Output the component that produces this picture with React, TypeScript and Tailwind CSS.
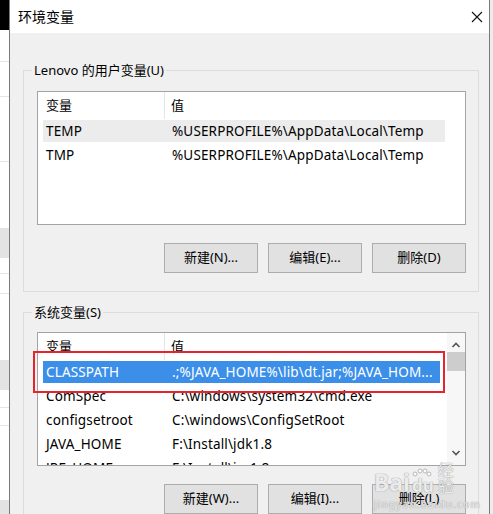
import React from 'react';

const FONT = "font-['Noto_Sans','Noto_Sans_CJK_SC',sans-serif]";

type Row = { name: string; value: string; tone?: 'hover' | 'selected' };

const userRows: Row[] = [
  { name: 'TEMP', value: '%USERPROFILE%\\AppData\\Local\\Temp', tone: 'hover' },
  { name: 'TMP', value: '%USERPROFILE%\\AppData\\Local\\Temp' },
];

const systemRows: Row[] = [
  { name: 'CLASSPATH', value: '.;%JAVA_HOME%\\lib\\dt.jar;%JAVA_HOM...', tone: 'selected' },
  { name: 'ComSpec', value: 'C:\\windows\\system32\\cmd.exe' },
  { name: 'configsetroot', value: 'C:\\windows\\ConfigSetRoot' },
  { name: 'JAVA_HOME', value: 'F:\\Install\\jdk1.8' },
  { name: 'JRE_HOME', value: 'F:\\Install\\jre1.8' },
];

const VarList: React.FC<{ rows: Row[]; scroll?: boolean }> = ({ rows, scroll }) => (
  <div className="ml-[13px] w-[429px] h-[134px] border border-[#a3a3a3] bg-white flex overflow-hidden">
    <div className="flex-1 flex flex-col overflow-hidden">
      <div className="h-[27px] flex items-stretch shrink-0">
        <div className="w-[127px] border-r border-[#e5e5e5] pl-[8px] flex items-center">变量</div>
        <div className="pl-[6px] flex items-center">值</div>
      </div>
      {rows.map((r) => (
        <div key={r.name} className="h-[24px] shrink-0 pl-[5px] flex">
          <div
            className={`flex items-center ${scroll ? 'w-[397px]' : 'w-[402px]'} my-[1px] ${
              r.tone === 'selected'
                ? 'bg-[#3b8fe9] text-white'
                : r.tone === 'hover'
                ? 'bg-[#ececec]'
                : ''
            }`}
          >
            <span className="w-[129px] pl-[3px] whitespace-nowrap text-[13.5px] tracking-[0.15px]">{r.name}</span>
            <span className="whitespace-nowrap text-[13.5px] tracking-[0.15px]">{r.value}</span>
          </div>
        </div>
      ))}
    </div>
    {scroll && (
      <div className="w-[18px] bg-[#f7f7f7] flex flex-col items-center">
        <svg width="10" height="8" viewBox="0 0 10 8" className="mt-[8px]">
          <path d="M1.5 6 L5 2.5 L8.5 6" fill="none" stroke="#555" strokeWidth="1.6" />
        </svg>
        <div className="mt-[3px] w-[18px] h-[19px] bg-[#cdcdcd]" />
        <div className="flex-1" />
        <svg width="10" height="8" viewBox="0 0 10 8" className="mb-[8px]">
          <path d="M1.5 2 L5 5.5 L8.5 2" fill="none" stroke="#555" strokeWidth="1.6" />
        </svg>
      </div>
    )}
  </div>
);

const Buttons: React.FC<{ labels: string[] }> = ({ labels }) => (
  <div className="ml-[140px] flex gap-[10px]">
    {labels.map((l) => (
      <button
        key={l}
        className="w-[94px] h-[30px] bg-[#e1e1e1] border border-[#adadad] text-black flex items-center justify-center"
      >
        {l}
      </button>
    ))}
  </div>
);

export default function App() {
  return (
    <div className={`relative w-[493px] h-[514px] overflow-hidden flex bg-white text-[13px] text-black ${FONT}`}>
      {/* background window peeking out */}
      <div className="w-[9px] flex flex-col bg-white">
        <div className="h-[30px] bg-black" />
        <div className="h-[32px] border-b border-[#e6e6e6]" />
        <div className="h-[35px] border-b border-[#e6e6e6]" />
        <div className="h-[65px] border-b border-[#e6e6e6]" />
        <div className="h-[66px]" />
        <div className="h-[30px] bg-[#e3e3e3]" />
        <div className="h-[16px] border-b border-[#e6e6e6]" />
        <div className="h-[20px] border-b border-[#e6e6e6]" />
        <div className="h-[66px]" />
        <div className="h-[30px] bg-[#e3e3e3]" />
        <div className="h-[18px] border-b border-[#e6e6e6]" />
        <div className="h-[18px] border-b border-[#e6e6e6]" />
        <div className="h-[74px]" />
        <div className="flex-1 bg-[#e3e3e3]" />
      </div>

      {/* dialog */}
      <div className="flex-1 flex flex-col border-x border-[#7a7a7a] bg-[#f0f0f0]">
        <div className="h-[33px] bg-white flex items-center justify-between pl-[8px] pr-[4px] shrink-0">
          <span className="text-[14px]">环境变量</span>
          <svg width="12" height="12" viewBox="0 0 12 12" className="mr-[2px]">
            <path d="M1 1 L11 11 M11 1 L1 11" stroke="#111" strokeWidth="1.1" />
          </svg>
        </div>

        <fieldset className="mt-[28px] ml-[13px] w-[456px] border border-[#dcdcdc] pb-[18px]">
          <legend className="ml-[8px] px-[2px] leading-[18px]">Lenovo 的用户变量(U)</legend>
          <div className="mt-[12px]">
            <VarList rows={userRows} />
          </div>
          <div className="mt-[18px]">
            <Buttons labels={['新建(N)...', '编辑(E)...', '删除(D)']} />
          </div>
        </fieldset>

        <fieldset className="mt-[11px] ml-[13px] w-[456px] border border-[#dcdcdc] pb-[18px]">
          <legend className="ml-[8px] px-[2px] leading-[18px]">系统变量(S)</legend>
          <div className="relative mt-[11px]">
            <VarList rows={systemRows} scroll />
            <div className="absolute left-[9px] top-[19px] w-[412px] h-[42px] border-2 border-[#e8232b]" />
          </div>
          <div className="mt-[18px]">
            <Buttons labels={['新建(W)...', '编辑(I)...', '删除(L)']} />
          </div>
        </fieldset>
      </div>
      <div className="w-[3px] bg-[#ececec]" />

      {/* watermark */}
      <div className="absolute left-[374px] top-[462px] w-[90px] flex flex-col pointer-events-none text-white/80 [text-shadow:0_0_1px_#9a9a9a,0_0_1px_#9a9a9a]">
        <div className="flex items-end leading-none">
          <span className="text-[23px] font-bold">Bai</span>
          <span className="relative ml-[2px] text-[17px] font-bold">
            <svg width="20" height="9" viewBox="0 0 20 9" className="absolute -top-[9px] left-0">
              <g fill="rgba(255,255,255,0.8)" stroke="#a8a8a8" strokeWidth="0.8">
                <circle cx="3" cy="6" r="2" />
                <circle cx="8" cy="3" r="2" />
                <circle cx="13" cy="3" r="2" />
                <circle cx="17" cy="6" r="2" />
              </g>
            </svg>
            du
          </span>
          <span className="ml-[4px] text-[16px]">经验</span>
        </div>
        <span className="text-[10px] tracking-[1.2px] leading-none mt-[5px]">jingyan.baidu.com</span>
      </div>
    </div>
  );
}
